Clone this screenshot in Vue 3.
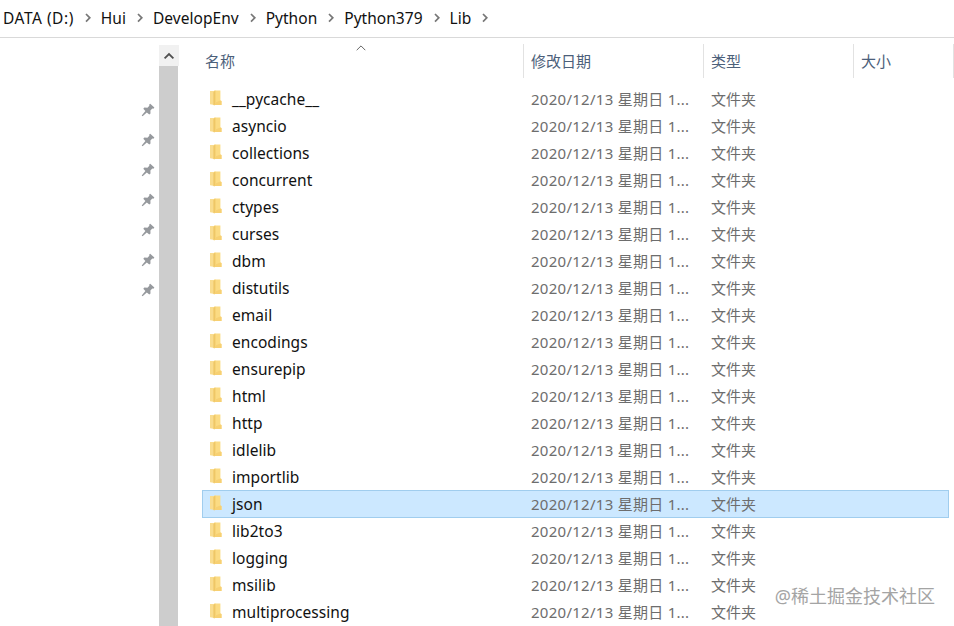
<template>
  <div class="explorer">
    <nav class="breadcrumb">
      <template v-for="crumb in crumbs" :key="crumb">
        <span class="crumb">{{ crumb }}</span>
        <svg class="crumb-arrow" viewBox="0 0 27 12" width="27" height="12">
          <path d="M12 2 L15.8 5.8 L12 9.6" fill="none" stroke="#777" stroke-width="1.7" />
        </svg>
      </template>
    </nav>

    <div class="body">
      <aside class="sidebar">
        <div v-for="n in 7" :key="n" class="pin">
          <svg viewBox="0 0 14 14" width="14" height="14">
            <path
              d="M9.2 0.8 L13.4 4.6 L12.4 5.8 L11.3 5.6 L9.4 7.6 L9.5 10.4 L8.3 11.5 L5.8 9.4 L1.6 13.2 L0.7 12.4 L4.4 8 L2.3 5.8 L3.4 4.6 L6.4 4.8 L8.4 2.8 L8.1 1.8 Z"
              fill="#96999d"
            />
          </svg>
        </div>
      </aside>

      <div class="scrollbar">
        <div class="scroll-up">
          <svg viewBox="0 0 12 8" width="12" height="8">
            <path d="M1.6 6.4 L6 2 L10.4 6.4" fill="none" stroke="#505050" stroke-width="1.8" />
          </svg>
        </div>
        <div class="thumb"></div>
      </div>

      <main class="list">
        <header class="head">
          <div class="cell name">
            名称
            <svg class="sort" viewBox="0 0 10 6" width="10" height="6">
              <path d="M0.7 5.2 L5 0.9 L9.3 5.2" fill="none" stroke="#666" stroke-width="1" />
            </svg>
          </div>
          <div class="cell date">修改日期</div>
          <div class="cell type">类型</div>
          <div class="cell size">大小</div>
        </header>

        <div
          v-for="folder in folders"
          :key="folder"
          class="row"
          :class="{ selected: folder === selected }"
          @click="selected = folder"
        >
          <div class="row-name">
            <svg class="folder" viewBox="0 0 12 16" width="12" height="16">
              <path d="M0 1 H4.5 V15 L0 14.2 Z" fill="#f9dc8e" />
              <path d="M4 0.4 H10.4 V10.6 L11.5 11 V15 H4 Z" fill="#fbdb83" />
              <path d="M4 1.6 L5.4 0.6 V11.8 L4.6 15.4 L3.4 15 V2 Z" fill="#efc766" />
              <path d="M5.4 12.6 L10.4 10.6 L11.5 11 V15 H4.6 Z" fill="#f7d072" />
            </svg>
            <span>{{ folder }}</span>
          </div>
          <div class="row-date">2020/12/13 星期日 1...</div>
          <div class="row-type">文件夹</div>
        </div>
      </main>
    </div>

    <div class="watermark">@稀土掘金技术社区</div>
  </div>
</template>

<script setup>
import { ref } from 'vue'

const crumbs = ['DATA (D:)', 'Hui', 'DevelopEnv', 'Python', 'Python379', 'Lib']

const folders = [
  '__pycache__',
  'asyncio',
  'collections',
  'concurrent',
  'ctypes',
  'curses',
  'dbm',
  'distutils',
  'email',
  'encodings',
  'ensurepip',
  'html',
  'http',
  'idlelib',
  'importlib',
  'json',
  'lib2to3',
  'logging',
  'msilib',
  'multiprocessing'
]

const selected = ref('json')
</script>

<style>
body {
  background: #fff;
  overflow: hidden;
}
</style>

<style scoped>
.explorer {
  position: relative;
  display: flex;
  flex-direction: column;
  width: 954px;
  height: 626px;
  overflow: hidden;
  background: #fff;
  color: #111;
  font-family: 'Noto Sans', 'Noto Sans CJK SC', sans-serif;
  font-size: 15px;
  cursor: default;
}

.breadcrumb {
  display: flex;
  align-items: center;
  flex-shrink: 0;
  box-sizing: border-box;
  height: 38px;
  padding: 0 0 2px 3px;
  border-bottom: 1px solid #d9d9d9;
  font-size: 15.5px;
  white-space: nowrap;
}

.crumb {
  letter-spacing: 0.03px;
}

.crumb:first-child {
  letter-spacing: 0.53px;
}

.crumb-arrow {
  flex-shrink: 0;
}

.body {
  display: flex;
  flex: 1;
  min-height: 0;
}

.sidebar {
  display: flex;
  flex-direction: column;
  align-items: flex-end;
  width: 155px;
  padding: 57px 4px 0 0;
  box-sizing: content-box;
}

.pin {
  display: flex;
  align-items: center;
  height: 30px;
}

.scrollbar {
  display: flex;
  flex-direction: column;
  width: 20px;
  padding-top: 7px;
}

.scroll-up {
  display: flex;
  align-items: center;
  justify-content: center;
  height: 21px;
  background: #f1f1f1;
}

.thumb {
  flex: 1;
  width: 19px;
  background: #cdcdcd;
}

.list {
  width: 752px;
  padding: 6px 0 0 23px;
}

.head {
  display: flex;
  height: 34px;
  margin-bottom: 8px;
  color: #4c607a;
}

.cell {
  position: relative;
  box-sizing: border-box;
  line-height: 34px;
  padding-left: 7px;
  border-right: 1px solid #e2e2e2;
}

.name {
  width: 322px;
  padding-left: 3px;
}

.sort {
  position: absolute;
  left: 154px;
  top: 1px;
}

.date {
  width: 180px;
}

.type {
  width: 150px;
}

.size {
  width: 100px;
}

.row {
  display: flex;
  align-items: center;
  box-sizing: border-box;
  width: 747px;
  height: 27px;
  padding-bottom: 1px;
  border: 0 solid #99d1ff;
  color: #6d6d6d;
  line-height: 26px;
  white-space: nowrap;
}

.row.selected {
  height: 28px;
  margin-top: -1px;
  padding-bottom: 0;
  border-width: 1px;
  border-color: #a0cdee;
  background: #cce8ff;
}

.row-name {
  display: flex;
  align-items: center;
  flex-shrink: 0;
  width: 321px;
  padding-left: 8px;
  gap: 10px;
  color: #111;
  font-size: 15.5px;
  letter-spacing: 0.05px;
}

.folder {
  position: relative;
  top: -1px;
}

.selected .row-name {
  margin-left: -1px;
}

.row-date {
  flex-shrink: 0;
  width: 180px;
  letter-spacing: 0.27px;
}

.watermark {
  position: absolute;
  right: 19px;
  bottom: 17px;
  color: #a4a4a4;
  font-size: 18px;
  line-height: 26px;
  white-space: nowrap;
}
</style>
